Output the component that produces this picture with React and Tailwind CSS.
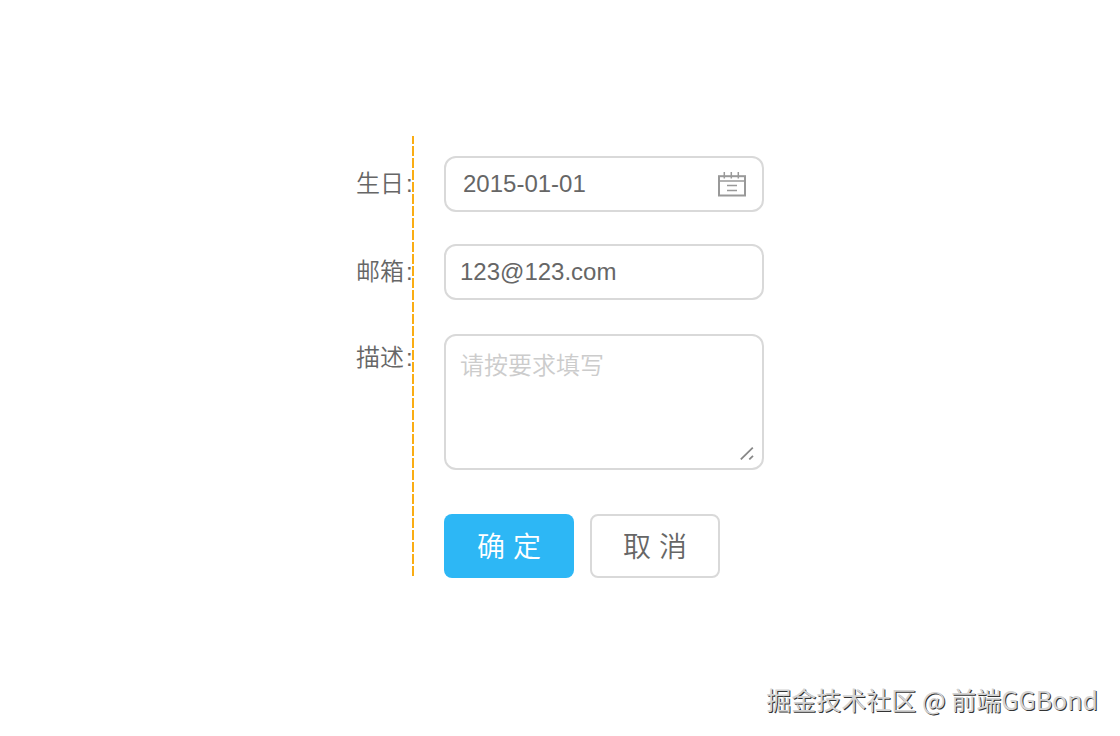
import React, { useState } from 'react';

const fieldClass =
  'block w-full rounded-xl border-2 border-[#d9d9d9] bg-white text-2xl text-[#666] outline-none focus:border-[#2db7f5]';

const labelClass =
  "whitespace-nowrap text-2xl text-[#666] font-[350] after:ml-0.5 after:content-[':']";

const CalendarIcon = () => (
  <svg width="28" height="25" viewBox="0 0 28 25" fill="none" stroke="#999" strokeWidth="2">
    <rect x="1" y="4.2" width="26" height="19.3" />
    <path d="M1 9h26" strokeWidth="1.5" />
    <path d="M9 13.4h10M9 18.4h10" strokeWidth="1.5" />
    <path d="M6.3 0v6.5M13.3 0v6.5M20.3 0v6.5" strokeWidth="1.5" />
  </svg>
);

const ResizeGrip = () => (
  <svg width="14" height="14" viewBox="0 0 14 14" fill="none" stroke="#888" strokeWidth="1.8">
    <path d="M0.8 13.4L12.8 1.6M9.3 13.4L13 9.8" />
  </svg>
);

const App = () => {
  const [birthday, setBirthday] = useState('2015-01-01');
  const [email, setEmail] = useState('123@123.com');
  const [description, setDescription] = useState('');

  const handleReset = () => {
    setBirthday('');
    setEmail('');
    setDescription('');
  };

  return (
    <div className="flex min-h-screen flex-col justify-between bg-white font-['Liberation_Sans','Noto_Sans_CJK_SC',sans-serif]">
      <main className="px-4 pt-[136px]">
        <form
          className="relative mx-auto grid w-full max-w-[408px] grid-cols-[56px_1fr] gap-x-8 pt-5"
          onSubmit={(e) => e.preventDefault()}
        >
          <label htmlFor="birthday" className={`${labelClass} leading-[56px]`}>生日</label>
          <div className="relative mb-8">
            <input
              id="birthday"
              type="text"
              value={birthday}
              onChange={(e) => setBirthday(e.target.value)}
              className={`${fieldClass} h-14 pl-[17px] pr-14`}
            />
            <button type="button" aria-label="选择日期" className="absolute right-[18px] top-4 cursor-pointer">
              <CalendarIcon />
            </button>
          </div>

          <label htmlFor="email" className={`${labelClass} leading-[56px]`}>邮箱</label>
          <div className="mb-[34px]">
            <input
              id="email"
              type="email"
              value={email}
              onChange={(e) => setEmail(e.target.value)}
              className={`${fieldClass} h-14 px-[14px]`}
            />
          </div>

          <label htmlFor="description" className={`${labelClass} leading-[48px]`}>描述</label>
          <div className="relative mb-11">
            <textarea
              id="description"
              placeholder="请按要求填写"
              value={description}
              onChange={(e) => setDescription(e.target.value)}
              className={`${fieldClass} h-[136px] resize-none px-[14px] py-3 leading-9 font-[350] placeholder:text-[#ccc]`}
            />
            <span className="pointer-events-none absolute bottom-2.5 right-2.5">
              <ResizeGrip />
            </span>
          </div>

          <div className="col-start-2 flex gap-4">
            <button
              type="submit"
              className="h-16 w-[130px] cursor-pointer rounded-lg bg-[#2db7f5] pt-1 text-[28px] font-[350] text-white"
            >
              确 定
            </button>
            <button
              type="button"
              onClick={handleReset}
              className="h-16 w-[130px] cursor-pointer rounded-lg border-2 border-[#d9d9d9] bg-white pt-1 text-[28px] font-[350] text-[#666]"
            >
              取 消
            </button>
          </div>

          {/* Dashed guide on the edge of the label column */}
          <div
            aria-hidden="true"
            className="absolute bottom-0.5 left-14 top-0 w-0.5 bg-[repeating-linear-gradient(to_bottom,#faad14_0px,#faad14_8px,#ffffff_8px,#ffffff_10px,#faad14_10px,#faad14_12px)]"
          />
        </form>
      </main>

      <footer className="pb-[18px] pr-[22px] text-right font-['Noto_Sans_CJK_SC',sans-serif] text-[25px] text-[#d4d4d4] [text-shadow:1px_1px_0_#333]">
        掘金技术社区 @ 前端GGBond
      </footer>
    </div>
  );
};

export default App;
